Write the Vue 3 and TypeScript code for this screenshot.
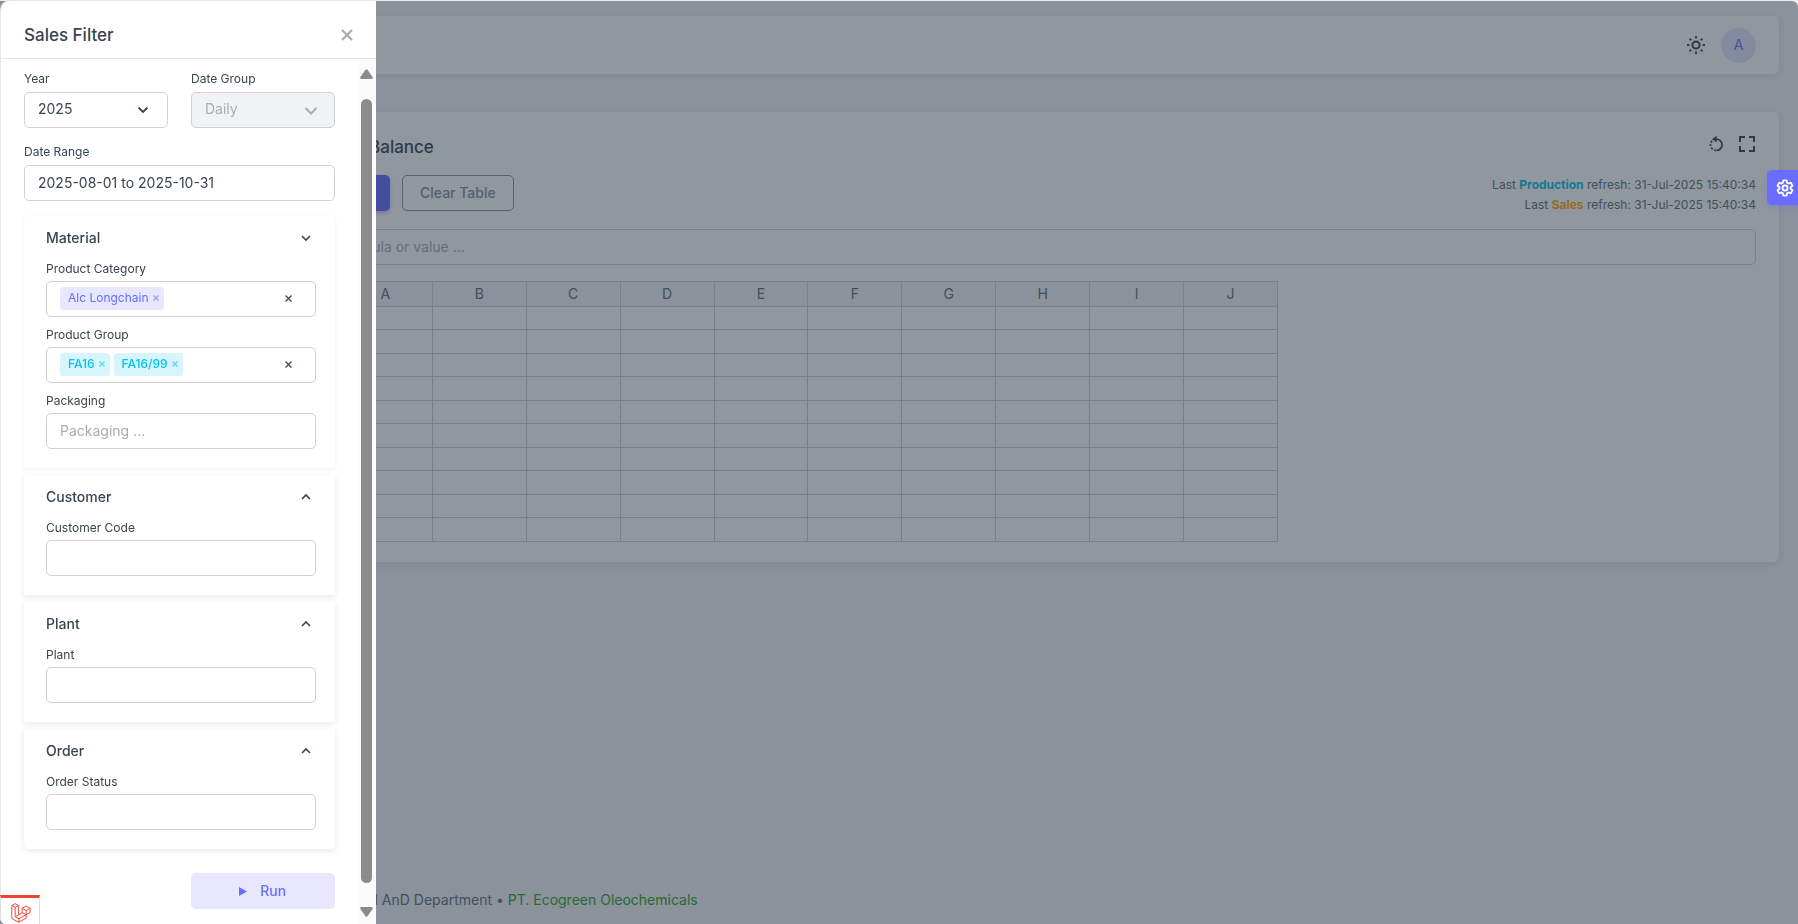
<script setup lang="ts">
import { ref } from 'vue'

interface Tag {
  label: string
}
interface TagField {
  id: string
  label: string
  tone: string
  tags: Tag[]
}
interface Section {
  id: string
  title: string
  field: string
}

const year = ref('2025')
const group = ref('Daily')
const range = ref('2025-08-01 to 2025-10-31')
const tagFields = ref<TagField[]>([
  { id: 'category', label: 'Product Category', tone: 'primary', tags: [{ label: 'Alc Longchain' }] },
  { id: 'group', label: 'Product Group', tone: 'info', tags: [{ label: 'FA16' }, { label: 'FA16/99' }] },
])
const sections: Section[] = [
  { id: 'customer', title: 'Customer', field: 'Customer Code' },
  { id: 'plant', title: 'Plant', field: 'Plant' },
  { id: 'order', title: 'Order', field: 'Order Status' },
]
const columns = ['A', 'B', 'C', 'D', 'E', 'F', 'G', 'H', 'I', 'J']

function removeTag(field: TagField, index: number) {
  field.tags.splice(index, 1)
}
</script>

<template>
  <div class="app">
    <div class="page">
      <header class="navbar">
        <button class="icon-btn" aria-label="Theme">
          <svg width="20" height="20" viewBox="0 0 20 20" fill="none" stroke="currentColor" stroke-width="2">
            <circle cx="10" cy="10" r="3.6" />
            <path d="M10 1v2.4M10 16.600v2.400M1 10h2.400M16.600 10h2.400M3.700 3.700l1.500 1.500M14.800 14.800l1.500 1.500M3.700 16.300l1.500-1.500M14.800 5.200l1.500-1.500" />
          </svg>
        </button>
        <button class="avatar" aria-label="Account">A</button>
      </header>

      <main class="card">
        <div class="card-head">
          <h1>Production Balance</h1>
          <div class="tools">
            <button class="icon-btn" aria-label="Refresh">
              <svg width="16" height="18" viewBox="0 0 16 18" fill="none" stroke="currentColor" stroke-width="1.800">
                <path d="M7 4.200h1.500a5.600 5.600 0 0 1 0 11.200" />
                <path d="M8 15.400a5.700 5.700 0 0 1-5.500-6.500q.4-2 2-3.400" stroke-dasharray="2 1.600" />
                <path d="M8.600 .8v6.800L4 4.200z" fill="currentColor" stroke="none" />
              </svg>
            </button>
            <button class="icon-btn" aria-label="Full screen">
              <svg width="16" height="16" viewBox="0 0 16 16" fill="none" stroke="currentColor" stroke-width="2">
                <path d="M1 6V1h5M10 1h5v5M15 10v5h-5M6 15H1v-5" />
              </svg>
            </button>
          </div>
        </div>
        <div class="actions">
          <button class="btn solid">Filter</button>
          <button class="btn outline">Clear Table</button>
          <p class="refresh">
            Last <b class="production">Production</b> refresh: 31-Jul-2025 15:40:34<br />
            Last <b class="sales">Sales</b> refresh: 31-Jul-2025 15:40:34
          </p>
        </div>
        <input class="control formula" aria-label="Formula" placeholder="Enter a formula or value ..." />
        <table class="sheet">
          <thead>
            <tr>
              <th class="corner"></th>
              <th v-for="c in columns" :key="c" scope="col">{{ c }}</th>
            </tr>
          </thead>
          <tbody>
            <tr v-for="r in 10" :key="r">
              <th scope="row">{{ r }}</th>
              <td v-for="c in columns" :key="c"></td>
            </tr>
          </tbody>
        </table>
      </main>

      <footer class="footer">
        <span class="dept">IT and AnD Department</span><span>&nbsp;•&nbsp;</span><a href="#">PT. Ecogreen Oleochemicals</a>
      </footer>
    </div>

    <div class="backdrop"></div>

    <button class="customizer" aria-label="Settings">
      <svg width="18" height="18" viewBox="0 0 24 24" fill="none" stroke="currentColor" stroke-width="2.400" stroke-linejoin="round">
        <circle cx="12" cy="12" r="3.400" />
        <path d="M9.700 1.800h4.600l.5 3.200 1.900 1.100 3-1.200 2.300 4-2.500 2v2.200l2.500 2-2.300 4-3-1.200-1.900 1.100-.5 3.200H9.700l-.5-3.200-1.900-1.100-3 1.200-2.300-4 2.500-2v-2.200l-2.500-2 2.300-4 3 1.200L9.200 5z" />
      </svg>
    </button>

    <aside class="drawer">
      <div class="drawer-head">
        <h2>Sales Filter</h2>
        <button class="close" aria-label="Close">
          <svg width="12" height="12" viewBox="0 0 12 12" stroke="currentColor" stroke-width="2.200"><path d="M1 1l10 10M11 1L1 11" /></svg>
        </button>
      </div>
      <div class="drawer-body">
        <form class="form" @submit.prevent>
          <div class="row">
            <div class="field">
              <label for="year">Year</label>
              <div class="select">
                <select id="year" v-model="year" class="control"><option>2025</option></select>
                <svg width="12" height="12" viewBox="0 0 12 12" fill="none" stroke="currentColor" stroke-width="1.800"><path d="M1.500 3.500L6 8l4.500-4.500" /></svg>
              </div>
            </div>
            <div class="field">
              <label for="date-group">Date Group</label>
              <div class="select disabled">
                <select id="date-group" v-model="group" class="control" disabled><option>Daily</option></select>
                <svg width="14" height="14" viewBox="0 0 14 14" fill="none" stroke="currentColor" stroke-width="2"><path d="M1.500 4L7 9.500 12.500 4" /></svg>
              </div>
            </div>
          </div>
          <div class="field range">
            <label for="range">Date Range</label>
            <input id="range" v-model="range" class="control" />
          </div>

          <div class="accordion">
            <section class="panel material">
              <button type="button" class="panel-title">
                Material
                <svg width="12" height="12" viewBox="0 0 12 12" fill="none" stroke="currentColor" stroke-width="1.600"><path d="M2 4l4 4 4-4" /></svg>
              </button>
              <div v-for="f in tagFields" :key="f.id" class="field">
                <label :for="f.id">{{ f.label }}</label>
                <div class="control tags">
                  <span v-for="(t, i) in f.tags" :key="t.label" class="tag" :class="f.tone">
                    {{ t.label }}
                    <button type="button" :aria-label="'Remove ' + t.label" @click="removeTag(f, i)">
                      <svg width="6" height="6" viewBox="0 0 6 6" stroke="currentColor" stroke-width="1.200"><path d="M.5.5l5 5M5.500.5l-5 5" /></svg>
                    </button>
                  </span>
                  <input :id="f.id" />
                  <button type="button" class="clear" :aria-label="'Clear ' + f.label" @click="f.tags = []">
                    <svg width="7" height="7" viewBox="0 0 7 7" stroke="currentColor" stroke-width="1.200"><path d="M.5.5l6 6M6.500.5l-6 6" /></svg>
                  </button>
                </div>
              </div>
              <div class="field">
                <label for="packaging">Packaging</label>
                <input id="packaging" class="control" placeholder="Packaging ..." />
              </div>
            </section>

            <section v-for="s in sections" :key="s.id" class="panel">
              <button type="button" class="panel-title">
                {{ s.title }}
                <svg width="12" height="12" viewBox="0 0 12 12" fill="none" stroke="currentColor" stroke-width="1.600"><path d="M2 8l4-4 4 4" /></svg>
              </button>
              <div class="field">
                <label :for="s.id">{{ s.field }}</label>
                <input :id="s.id" class="control" />
              </div>
            </section>
          </div>

          <button class="run">
            <svg width="8" height="9" viewBox="0 0 8 9" fill="currentColor"><path d="M0 0l8 4.500L0 9z" /></svg>
            Run
          </button>
        </form>
        <div class="scrollbar" aria-hidden="true">
          <svg width="13" height="10" viewBox="0 0 13 10"><path d="M5.500.8q1-1 2 0L12.600 8q.6 2-1 2H1.400q-1.600 0-1-2z" fill="#8b8b8b" /></svg>
          <div class="thumb"></div>
          <svg width="13" height="10" viewBox="0 0 13 10"><path d="M5.500 9.200q1 1 2 0L12.600 2q.6-2-1-2H1.400Q-.2 0 .4 2z" fill="#8b8b8b" /></svg>
        </div>
      </div>
    </aside>

    <a href="#" class="debug" aria-label="Debug bar">
      <svg width="20" height="20" viewBox="0 0 20 20" fill="none" stroke="#f5493b" stroke-width="1" stroke-linejoin="round">
        <path d="M.8 2.500L4.200.7l3.400 1.800v9.300l3.500-2V5.300l4-2.200 4 2.200v4.200l-4 2.200v3.500l-7.500 4.100-6.800-3.900z" />
        <path d="M.8 2.500l3.400 1.900 3.400-1.900M4.200 4.400v9.300l3.400-1.900M4.200 13.700l3.800 2.100 7.100-4.100M11.100 5.300l4 2.300 4-2.300M15.100 7.600v4.100M11.100 9.600l4 2.100M8 15.800v3.500" />
      </svg>
    </a>
  </div>
</template>

<style>
body {
  margin: 0;
  background: #eeeeee;
}
</style>

<style scoped>
.app {
  min-height: 100vh;
  box-sizing: border-box;
  padding-top: 1px;
  font-family: Inter, "Liberation Sans", sans-serif;
  font-size: 14px;
  line-height: 20px;
  color: #646e78;
}
.app *,
.app *::before {
  box-sizing: border-box;
}
button,
input,
select {
  font: inherit;
  color: inherit;
  margin: 0;
}
button {
  padding: 0;
  border: 0;
  background: none;
  cursor: pointer;
}
h1,
h2,
p {
  margin: 0;
}
h1,
h2 {
  font-size: 17px;
  line-height: 24px;
  font-weight: 500;
  color: #384551;
}
svg {
  display: block;
  flex: none;
}
.page {
  min-height: calc(100vh - 1px);
  display: flex;
  flex-direction: column;
  background: #f5f5f9;
  padding: 15px 19px 14px 245px;
  border-top-right-radius: 6px;
}
.navbar {
  height: 58px;
  display: flex;
  align-items: center;
  justify-content: flex-end;
  gap: 15px;
  padding: 0 23px;
  background: #fff;
  border-radius: 6px;
  box-shadow: 0 2px 8px rgba(34, 48, 62, 0.12);
}
.icon-btn {
  color: #384551;
}
.avatar {
  width: 35px;
  height: 35px;
  border-radius: 50%;
  background: #e7e7ff;
  color: #696cff;
}
.card {
  margin-top: 38px;
  padding: 20px 23px;
  background: #fff;
  border-radius: 6px;
  box-shadow: 0 2px 8px rgba(34, 48, 62, 0.14);
}
.card-head {
  display: flex;
  justify-content: space-between;
  height: 43px;
}
.card-head h1 {
  padding: 3px 0 0 8px;
}
.tools {
  display: flex;
  align-items: center;
  height: 24px;
  gap: 15px;
  padding-right: 1px;
}
.actions {
  display: flex;
  gap: 12px;
}
.btn {
  height: 36px;
  border-radius: 5px;
  font-weight: 500;
}
.solid {
  width: 122px;
  background: #696cff;
  color: #fff;
  box-shadow: 0 2px 4px rgba(105, 108, 255, 0.4);
}
.outline {
  padding: 0 17px;
  border: 1px solid #8592a3;
  color: #8592a3;
}
.refresh {
  margin-left: auto;
  text-align: right;
  font-size: 12px;
}
.production {
  color: #03c3ec;
}
.sales {
  color: #ffab00;
}
.control {
  display: block;
  width: 100%;
  height: 36px;
  padding: 0 13px 2px;
  border: 1px solid #ced1d5;
  border-radius: 5px;
  background: #fff;
  color: #384551;
  outline: 0;
}
.control::placeholder {
  color: #a7acb2;
  opacity: 1;
}
.formula {
  margin-top: 14px;
  padding-left: 22px;
}
.sheet {
  margin-top: 16px;
  table-layout: fixed;
  width: 1010px;
  border-collapse: collapse;
}
.sheet th,
.sheet td {
  padding: 0;
  border: 1px solid #ced1d5;
  font-weight: 400;
}
.sheet thead th {
  height: 25px;
  background: #f5f5f9;
}
.sheet .corner {
  width: 70px;
}
.sheet tbody tr {
  height: 24px;
}
.sheet tbody tr:nth-child(odd) {
  height: 23px;
}
.footer {
  margin-top: auto;
  display: flex;
}
.dept {
  width: 247px;
  text-align: right;
  white-space: nowrap;
}
.footer a {
  color: #28a428;
  text-decoration: none;
}
.backdrop {
  position: fixed;
  inset: 1px 0 0;
  border-top-right-radius: 6px;
  background: rgba(34, 48, 62, 0.5);
}
.customizer {
  position: fixed;
  right: 0;
  top: 170px;
  width: 31px;
  height: 35px;
  padding-left: 9px;
  border-radius: 5px 0 0 5px;
  background: #696cff;
  color: #fff;
  box-shadow: 0 2px 4px rgba(105, 108, 255, 0.4);
}
.drawer {
  position: fixed;
  left: 0;
  top: 0;
  bottom: 0;
  width: 376px;
  display: flex;
  flex-direction: column;
  background: #fff;
  border: solid #e4e6e8;
  border-width: 1px 0 0 1px;
  border-radius: 10px 0 0 6px;
}
.drawer-head {
  display: flex;
  align-items: center;
  justify-content: space-between;
  height: 58px;
  padding: 10px 23px 0;
  border-bottom: 1px solid #e4e6e8;
}
.close {
  color: #a7acb2;
}
.drawer-body {
  flex: 1;
  min-height: 0;
  display: flex;
}
.form {
  flex: 1;
  min-width: 0;
  display: flex;
  flex-direction: column;
  padding: 10px 22px 0 23px;
}
.row {
  display: grid;
  grid-template-columns: 1fr 1fr;
  gap: 23px;
}
label {
  display: block;
  height: 23px;
  font-size: 12px;
  color: #384551;
}
.range {
  margin-top: 14px;
}
.select {
  position: relative;
}
.select select {
  appearance: none;
}
.select svg {
  position: absolute;
  right: 19px;
  top: 12px;
  color: #384551;
  pointer-events: none;
}
.disabled svg {
  right: 17px;
  color: #a7acb2;
}
.disabled .control {
  background: #f1f2f3;
  color: #a7acb2;
  opacity: 1;
}
.accordion {
  margin-top: 15px;
  display: flex;
  flex-direction: column;
  gap: 7px;
}
.panel {
  padding: 11px 19px 19px 22px;
  background: #fff;
  box-shadow: 0 2px 6px rgba(34, 48, 62, 0.1);
}
.material {
  border-radius: 5px 5px 0 0;
  box-shadow: 0 1px 4px rgba(34, 48, 62, 0.05);
}
.panel:last-child {
  border-radius: 0 0 5px 5px;
}
.panel-title {
  display: flex;
  justify-content: space-between;
  align-items: center;
  width: 100%;
  height: 22px;
  margin-bottom: 10px;
  padding-right: 4px;
  font-weight: 500;
  color: #384551;
}
.panel label {
  height: 22px;
}
.panel .field + .field {
  margin-top: 8px;
}
.tags {
  display: flex;
  align-items: center;
  gap: 4px;
}
.tags input {
  flex: 1;
  min-width: 0;
  border: 0;
  outline: 0;
  background: none;
}
.tag {
  display: flex;
  align-items: center;
  gap: 4px;
  height: 23px;
  padding: 0 5px 0 8px;
  border-radius: 3px;
  font-size: 12px;
}
.tag button {
  opacity: 0.6;
}
.primary {
  background: #e7e7ff;
  color: #696cff;
}
.info {
  background: #d7f5fc;
  color: #03c3ec;
  font-weight: 500;
}
.clear {
  margin-right: 10px;
}
.run {
  align-self: flex-end;
  display: flex;
  align-items: center;
  justify-content: center;
  gap: 13px;
  width: calc(50% - 11px);
  height: 36px;
  margin-top: 24px;
  border-radius: 5px;
  background: #e7e7ff;
  color: #696cff;
  font-weight: 500;
}
.scrollbar {
  width: 19px;
  display: flex;
  flex-direction: column;
  align-items: center;
  padding: 10px 0 7px;
  background: #fbfbfb;
}
.thumb {
  flex: 1;
  width: 11px;
  margin: 20px 0 24px;
  border-radius: 6px;
  background: #8b8b8b;
}
.debug {
  position: fixed;
  left: 0;
  bottom: 0;
  width: 40px;
  height: 29px;
  padding: 5px 10px;
  border: solid #dddddd;
  border-width: 0 1px;
  border-top: 3px solid #eb4432;
  border-bottom-left-radius: 6px;
  background: #fff;
}
</style>
